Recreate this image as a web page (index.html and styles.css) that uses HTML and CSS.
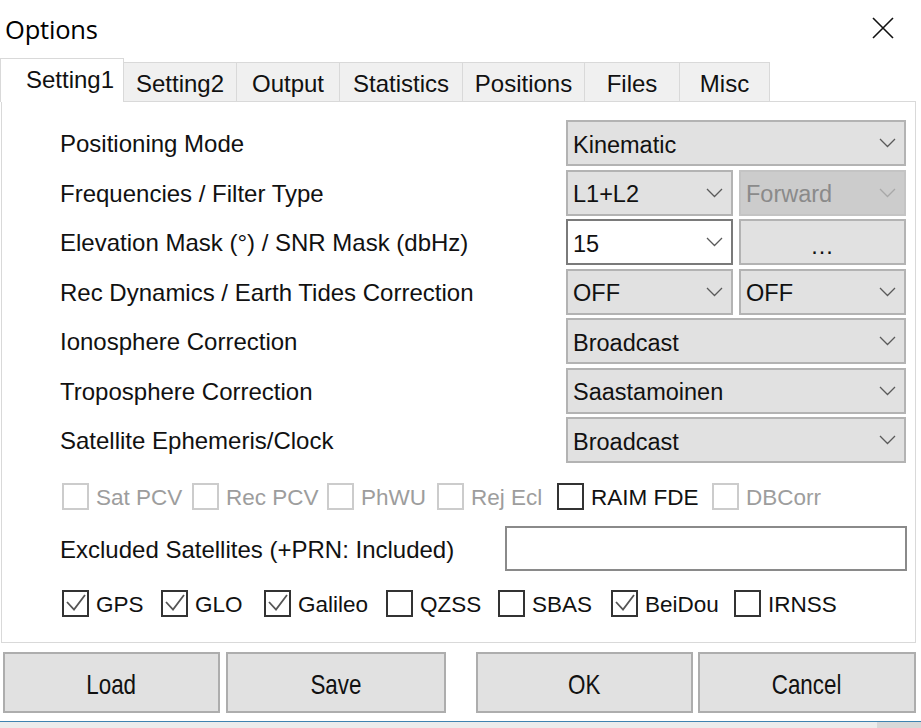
FILE: index.html
```html
<!DOCTYPE html>
<html>
<head>
<meta charset="utf-8">
<title>Options</title>
<link rel="stylesheet" href="styles.css">
</head>
<body>
<div class="dialog">
  <div class="titlebar">
    <span class="title">Options</span>
    <svg class="close" width="22" height="22" viewBox="0 0 22 22"><path d="M1 1 L21 21 M21 1 L1 21" stroke="#111" stroke-width="1.6" fill="none"/></svg>
  </div>
  <div class="tabs">
    <div class="tab active t1">Setting1</div>
    <div class="tab t2">Setting2</div>
    <div class="tab t3">Output</div>
    <div class="tab t4">Statistics</div>
    <div class="tab t5">Positions</div>
    <div class="tab t6">Files</div>
    <div class="tab t7">Misc</div>
  </div>
  <div class="panel">
    <div class="rows">
      <div class="row">
        <span class="lbl">Positioning Mode</span>
        <div class="combo"><span>Kinematic</span><svg class="chev" width="17" height="10" viewBox="0 0 17 10"><path d="M1 1 L8.5 8.5 L16 1" fill="none" stroke="#5a5a5a" stroke-width="1.3"/></svg></div>
      </div>
      <div class="row">
        <span class="lbl">Frequencies / Filter Type</span>
        <div class="pair">
          <div class="combo"><span>L1+L2</span><svg class="chev" width="17" height="10" viewBox="0 0 17 10"><path d="M1 1 L8.5 8.5 L16 1" fill="none" stroke="#5a5a5a" stroke-width="1.3"/></svg></div>
          <div class="combo disabled"><span>Forward</span><svg class="chev" width="17" height="10" viewBox="0 0 17 10"><path d="M1 1 L8.5 8.5 L16 1" fill="none" stroke="#a8a8a8" stroke-width="1.3"/></svg></div>
        </div>
      </div>
      <div class="row">
        <span class="lbl">Elevation Mask (°) / SNR Mask (dbHz)</span>
        <div class="pair">
          <div class="combo edit"><span>15</span><svg class="chev" width="17" height="10" viewBox="0 0 17 10"><path d="M1 1 L8.5 8.5 L16 1" fill="none" stroke="#5a5a5a" stroke-width="1.3"/></svg></div>
          <div class="combo dots"><span>...</span></div>
        </div>
      </div>
      <div class="row">
        <span class="lbl">Rec Dynamics / Earth Tides Correction</span>
        <div class="pair">
          <div class="combo"><span>OFF</span><svg class="chev" width="17" height="10" viewBox="0 0 17 10"><path d="M1 1 L8.5 8.5 L16 1" fill="none" stroke="#5a5a5a" stroke-width="1.3"/></svg></div>
          <div class="combo"><span>OFF</span><svg class="chev" width="17" height="10" viewBox="0 0 17 10"><path d="M1 1 L8.5 8.5 L16 1" fill="none" stroke="#5a5a5a" stroke-width="1.3"/></svg></div>
        </div>
      </div>
      <div class="row">
        <span class="lbl">Ionosphere Correction</span>
        <div class="combo"><span>Broadcast</span><svg class="chev" width="17" height="10" viewBox="0 0 17 10"><path d="M1 1 L8.5 8.5 L16 1" fill="none" stroke="#5a5a5a" stroke-width="1.3"/></svg></div>
      </div>
      <div class="row">
        <span class="lbl">Troposphere Correction</span>
        <div class="combo"><span>Saastamoinen</span><svg class="chev" width="17" height="10" viewBox="0 0 17 10"><path d="M1 1 L8.5 8.5 L16 1" fill="none" stroke="#5a5a5a" stroke-width="1.3"/></svg></div>
      </div>
      <div class="row">
        <span class="lbl">Satellite Ephemeris/Clock</span>
        <div class="combo"><span>Broadcast</span><svg class="chev" width="17" height="10" viewBox="0 0 17 10"><path d="M1 1 L8.5 8.5 L16 1" fill="none" stroke="#5a5a5a" stroke-width="1.3"/></svg></div>
      </div>
    </div>

    <div class="checks opts">
      <label class="cb off"><span class="box"></span><span class="txt">Sat PCV</span></label>
      <label class="cb off"><span class="box"></span><span class="txt">Rec PCV</span></label>
      <label class="cb off"><span class="box"></span><span class="txt">PhWU</span></label>
      <label class="cb off"><span class="box"></span><span class="txt">Rej Ecl</span></label>
      <label class="cb"><span class="box"></span><span class="txt">RAIM FDE</span></label>
      <label class="cb off"><span class="box"></span><span class="txt">DBCorr</span></label>
    </div>

    <div class="excl">
      <span class="lbl">Excluded Satellites (+PRN: Included)</span>
      <div class="input"></div>
    </div>

    <div class="checks nav">
      <label class="cb"><span class="box"><svg width="23" height="23" viewBox="0 0 23 23"><path d="M3 10 L10 17.5 L21 3" fill="none" stroke="#555" stroke-width="1.8"/></svg></span><span class="txt">GPS</span></label>
      <label class="cb"><span class="box"><svg width="23" height="23" viewBox="0 0 23 23"><path d="M3 10 L10 17.5 L21 3" fill="none" stroke="#555" stroke-width="1.8"/></svg></span><span class="txt">GLO</span></label>
      <label class="cb"><span class="box"><svg width="23" height="23" viewBox="0 0 23 23"><path d="M3 10 L10 17.5 L21 3" fill="none" stroke="#555" stroke-width="1.8"/></svg></span><span class="txt">Galileo</span></label>
      <label class="cb"><span class="box"></span><span class="txt">QZSS</span></label>
      <label class="cb"><span class="box"></span><span class="txt">SBAS</span></label>
      <label class="cb"><span class="box"><svg width="23" height="23" viewBox="0 0 23 23"><path d="M3 10 L10 17.5 L21 3" fill="none" stroke="#555" stroke-width="1.8"/></svg></span><span class="txt">BeiDou</span></label>
      <label class="cb"><span class="box"></span><span class="txt">IRNSS</span></label>
    </div>
  </div>

  <div class="buttons">
    <button class="btn b-load"><span class="bt">Load</span></button>
    <button class="btn b-save"><span class="bt">Save</span></button>
    <button class="btn b-ok"><span class="bt">OK</span></button>
    <button class="btn b-cancel"><span class="bt">Cancel</span></button>
  </div>
  <div class="bottomstrip"></div>
</div>
</body>
</html>
```

FILE: styles.css
```css
* { box-sizing: border-box; }
html, body {
  margin: 0;
  padding: 0;
  background: #ffffff;
}
body {
  width: 921px;
  height: 728px;
  overflow: hidden;
  font-family: "Liberation Sans", Arial, sans-serif;
  color: #111111;
}
.dialog {
  width: 921px;
  height: 728px;
  display: flex;
  flex-direction: column;
}

/* title bar */
.titlebar {
  height: 58px;
  display: flex;
  align-items: center;
  justify-content: space-between;
  padding: 0 27px 0 5px;
}
.title {
  font-family: "Open Sans", "Noto Sans", sans-serif;
  font-size: 25.5px;
  color: #000;
  letter-spacing: -0.2px;
}
.close { display: block; margin-top: -2px; }

/* tabs */
.tabs {
  height: 43px;
  display: flex;
  align-items: flex-end;
  position: relative;
  z-index: 1;
}
.tab {
  height: 39px;
  background: #f0f0f0;
  border: 1px solid #d9d9d9;
  border-bottom: none;
  margin-right: -1px;
  display: flex;
  align-items: center;
  justify-content: center;
  padding-top: 3px;
  font-size: 24px;
  color: #111;
}
.tab.active {
  height: 44px;
  margin-bottom: -1px;
  background: #ffffff;
  padding-top: 0;
  padding-bottom: 2px;
  padding-left: 16px;
  position: relative;
}
.t1 { width: 124px; }
.t2 { width: 114px; }
.t3 { width: 104px; }
.t4 { width: 124px; }
.t5 { width: 123px; }
.t6 { width: 96px; }
.t7 { width: 91px; }

/* panel */
.panel {
  margin-left: 1px;
  width: 915px;
  height: 542px;
  border: 1px solid #d9d9d9;
  background: #ffffff;
  padding: 18px 9px 0 58px;
}
.rows {
  display: flex;
  flex-direction: column;
  gap: 3.5px;
}
.row {
  height: 46px;
  display: grid;
  grid-template-columns: 1fr 340px;
  align-items: center;
}
.lbl {
  font-size: 24px;
  color: #111;
  white-space: nowrap;
  padding-top: 2px;
}
.pair {
  display: grid;
  grid-template-columns: 167px 167px;
  column-gap: 6px;
  height: 46px;
}
.combo {
  height: 46px;
  background: #e1e1e1;
  border: 2px solid #b3b3b3;
  display: flex;
  align-items: center;
  justify-content: space-between;
  padding: 0 8px 0 5px;
  font-size: 23.5px;
  color: #111;
  white-space: nowrap;
}
.combo span { padding-top: 4px; }
.combo .chev { display: block; flex: none; }
.combo.edit {
  background: #ffffff;
  border-color: #7a7a7a;
}
.combo.disabled {
  background: #cccccc;
  border-color: #c4c4c4;
  color: #8a8a8a;
}
.combo.dots {
  justify-content: center;
  padding: 0;
  letter-spacing: 1px;
}
.combo.dots span { padding-top: 8px; }

/* checkboxes */
.checks {
  display: grid;
  height: 27px;
  margin-left: 2px;
  align-items: center;
}
.opts {
  margin-top: 19px;
  grid-template-columns: 130px 135px 110px 120px 155px auto;
}
.nav {
  margin-top: 18px;
  grid-template-columns: 99px 103px 122px 112px 113px 123px auto;
}
.cb {
  display: flex;
  align-items: center;
  white-space: nowrap;
}
.box {
  width: 27px;
  height: 27px;
  border: 2px solid #333333;
  background: #ffffff;
  flex: none;
  display: flex;
  align-items: center;
  justify-content: center;
}
.box svg { display: block; }
.txt {
  margin-left: 7px;
  font-size: 22.5px;
  color: #111;
  padding-top: 3px;
}
.cb.off .box { border-color: #cccccc; }
.cb.off .txt { color: #9d9d9d; }

/* excluded sats */
.excl {
  margin-top: 17px;
  height: 45px;
  display: flex;
  align-items: center;
  justify-content: space-between;
}
.input {
  width: 402px;
  height: 45px;
  background: #ffffff;
  border: 2px solid #8a8a8a;
  margin-right: -1px;
}

/* buttons */
.buttons {
  margin-top: 9px;
  height: 61px;
  display: flex;
  padding-left: 3px;
}
.btn {
  height: 61px;
  background: #e1e1e1;
  border: 2px solid #adadad;
  font-family: "Liberation Sans", Arial, sans-serif;
  font-size: 28px;
  color: #111;
  padding: 5px 0 0 0;
  margin: 0;
  border-radius: 0;
  display: flex;
  align-items: center;
  justify-content: center;
}
.bt {
  display: inline-block;
  transform: scaleX(0.8);
}
.b-load { width: 217px; }
.b-save { width: 220px; margin-left: 6px; }
.b-ok { width: 217px; margin-left: 30px; }
.b-cancel { width: 218px; margin-left: 5px; }

.bottomstrip {
  margin-top: 8px;
  height: 7px;
  border-top: 1px solid #3f83b0;
  background: linear-gradient(to right, #ececec 877px, #d8d8d8 877px);
}
```
